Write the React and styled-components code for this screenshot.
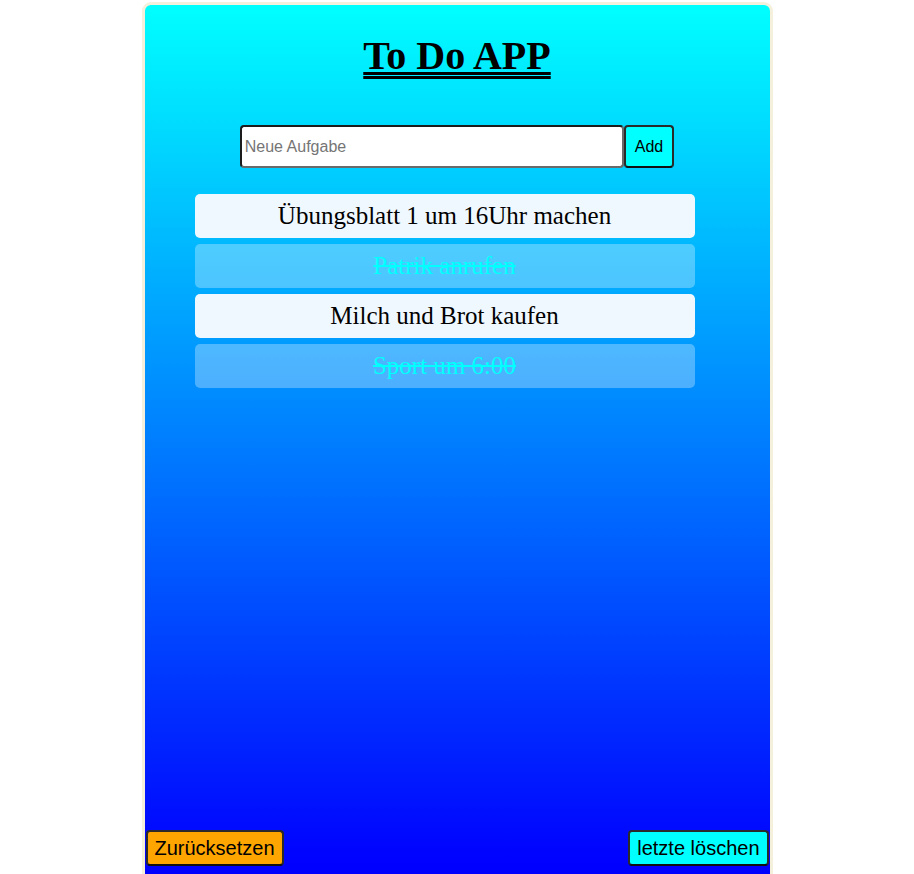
import React from "react";
import styled, { createGlobalStyle } from "styled-components";

const Global = createGlobalStyle`
  html, body { margin: 0; padding: 0; background: #ffffff; overflow: hidden; }
  body { font-family: "Liberation Serif", "Times New Roman", serif; }
`;

const Card = styled.div`
  box-sizing: content-box;
  width: 625px;
  height: 861px;
  margin: 2px auto 0;
  border: 3px solid #f4f0dc;
  border-radius: 9px;
  background: linear-gradient(#00ffff, #0000ff 98%);
  display: flex;
  flex-direction: column;
  align-items: center;
  padding: 0 0 16px;
`;

const Title = styled.h1`
  margin: 28px 0 0;
  font-size: 40px;
  font-weight: bold;
  line-height: 45px;
  color: #000;
  text-decoration: underline double;
  text-decoration-thickness: 2.5px;
  text-underline-offset: 3px;
`;

const Form = styled.div`
  display: flex;
  margin-top: 47px;
`;

const Input = styled.input`
  box-sizing: border-box;
  width: 384px;
  height: 43px;
  padding: 0 3px;
  border: 2px solid #1c1c1c;
  border-bottom-color: #6a6a6a;
  border-right-color: #6a6a6a;
  border-radius: 4px;
  font-family: "Liberation Sans", Arial, sans-serif;
  font-size: 16px;
  background: #fff;
  outline: none;
  &::placeholder { color: #757575; }
`;

const Button = styled.button`
  box-sizing: border-box;
  height: ${(p) => p.$h || 36}px;
  padding: 0 ${(p) => p.$px || 7}px;
  border: 2px solid #2a2a2a;
  border-bottom-color: #111;
  border-radius: 4px;
  background: ${(p) => p.$bg};
  color: #000;
  font-family: "Liberation Sans", Arial, sans-serif;
  font-size: ${(p) => p.$fs || 20}px;
  cursor: pointer;
`;

const List = styled.ul`
  box-sizing: border-box;
  list-style: none;
  margin: 26px 0 0;
  padding: 0 25px 0 0;
  width: 525px;
  display: flex;
  flex-direction: column;
  gap: 6px;
`;

const Item = styled.li`
  height: 44px;
  border-radius: 5px;
  display: flex;
  align-items: center;
  justify-content: center;
  font-size: 25px;
  background: ${(p) => (p.$done ? "rgba(255,255,255,0.3)" : "#f0f8ff")};
  color: ${(p) => (p.$done ? "#00ffff" : "#000")};
  text-decoration: ${(p) => (p.$done ? "line-through" : "none")};
  text-decoration-color: ${(p) => (p.$done ? "#00ffff" : "currentColor")};
`;

const Footer = styled.div`
  margin-top: auto;
  align-self: stretch;
  display: flex;
  justify-content: space-between;
  padding: 0 1px;
`;

const todos = [
  { text: "Übungsblatt 1 um 16Uhr machen", done: false },
  { text: "Patrik anrufen", done: true },
  { text: "Milch und Brot kaufen", done: false },
  { text: "Sport um 6:00", done: true },
];

export default function App() {
  return (
    <>
      <Global />
      <Card>
        <Title>To Do APP</Title>
        <Form>
          <Input placeholder="Neue Aufgabe" />
          <Button $bg="#00ffff" $h={43} $px={9} $fs={16}>Add</Button>
        </Form>
        <List>
          {todos.map((t) => (
            <Item key={t.text} $done={t.done}>{t.text}</Item>
          ))}
        </List>
        <Footer>
          <Button $bg="#ffa500">Zurücksetzen</Button>
          <Button $bg="#00ffff">letzte löschen</Button>
        </Footer>
      </Card>
    </>
  );
}
